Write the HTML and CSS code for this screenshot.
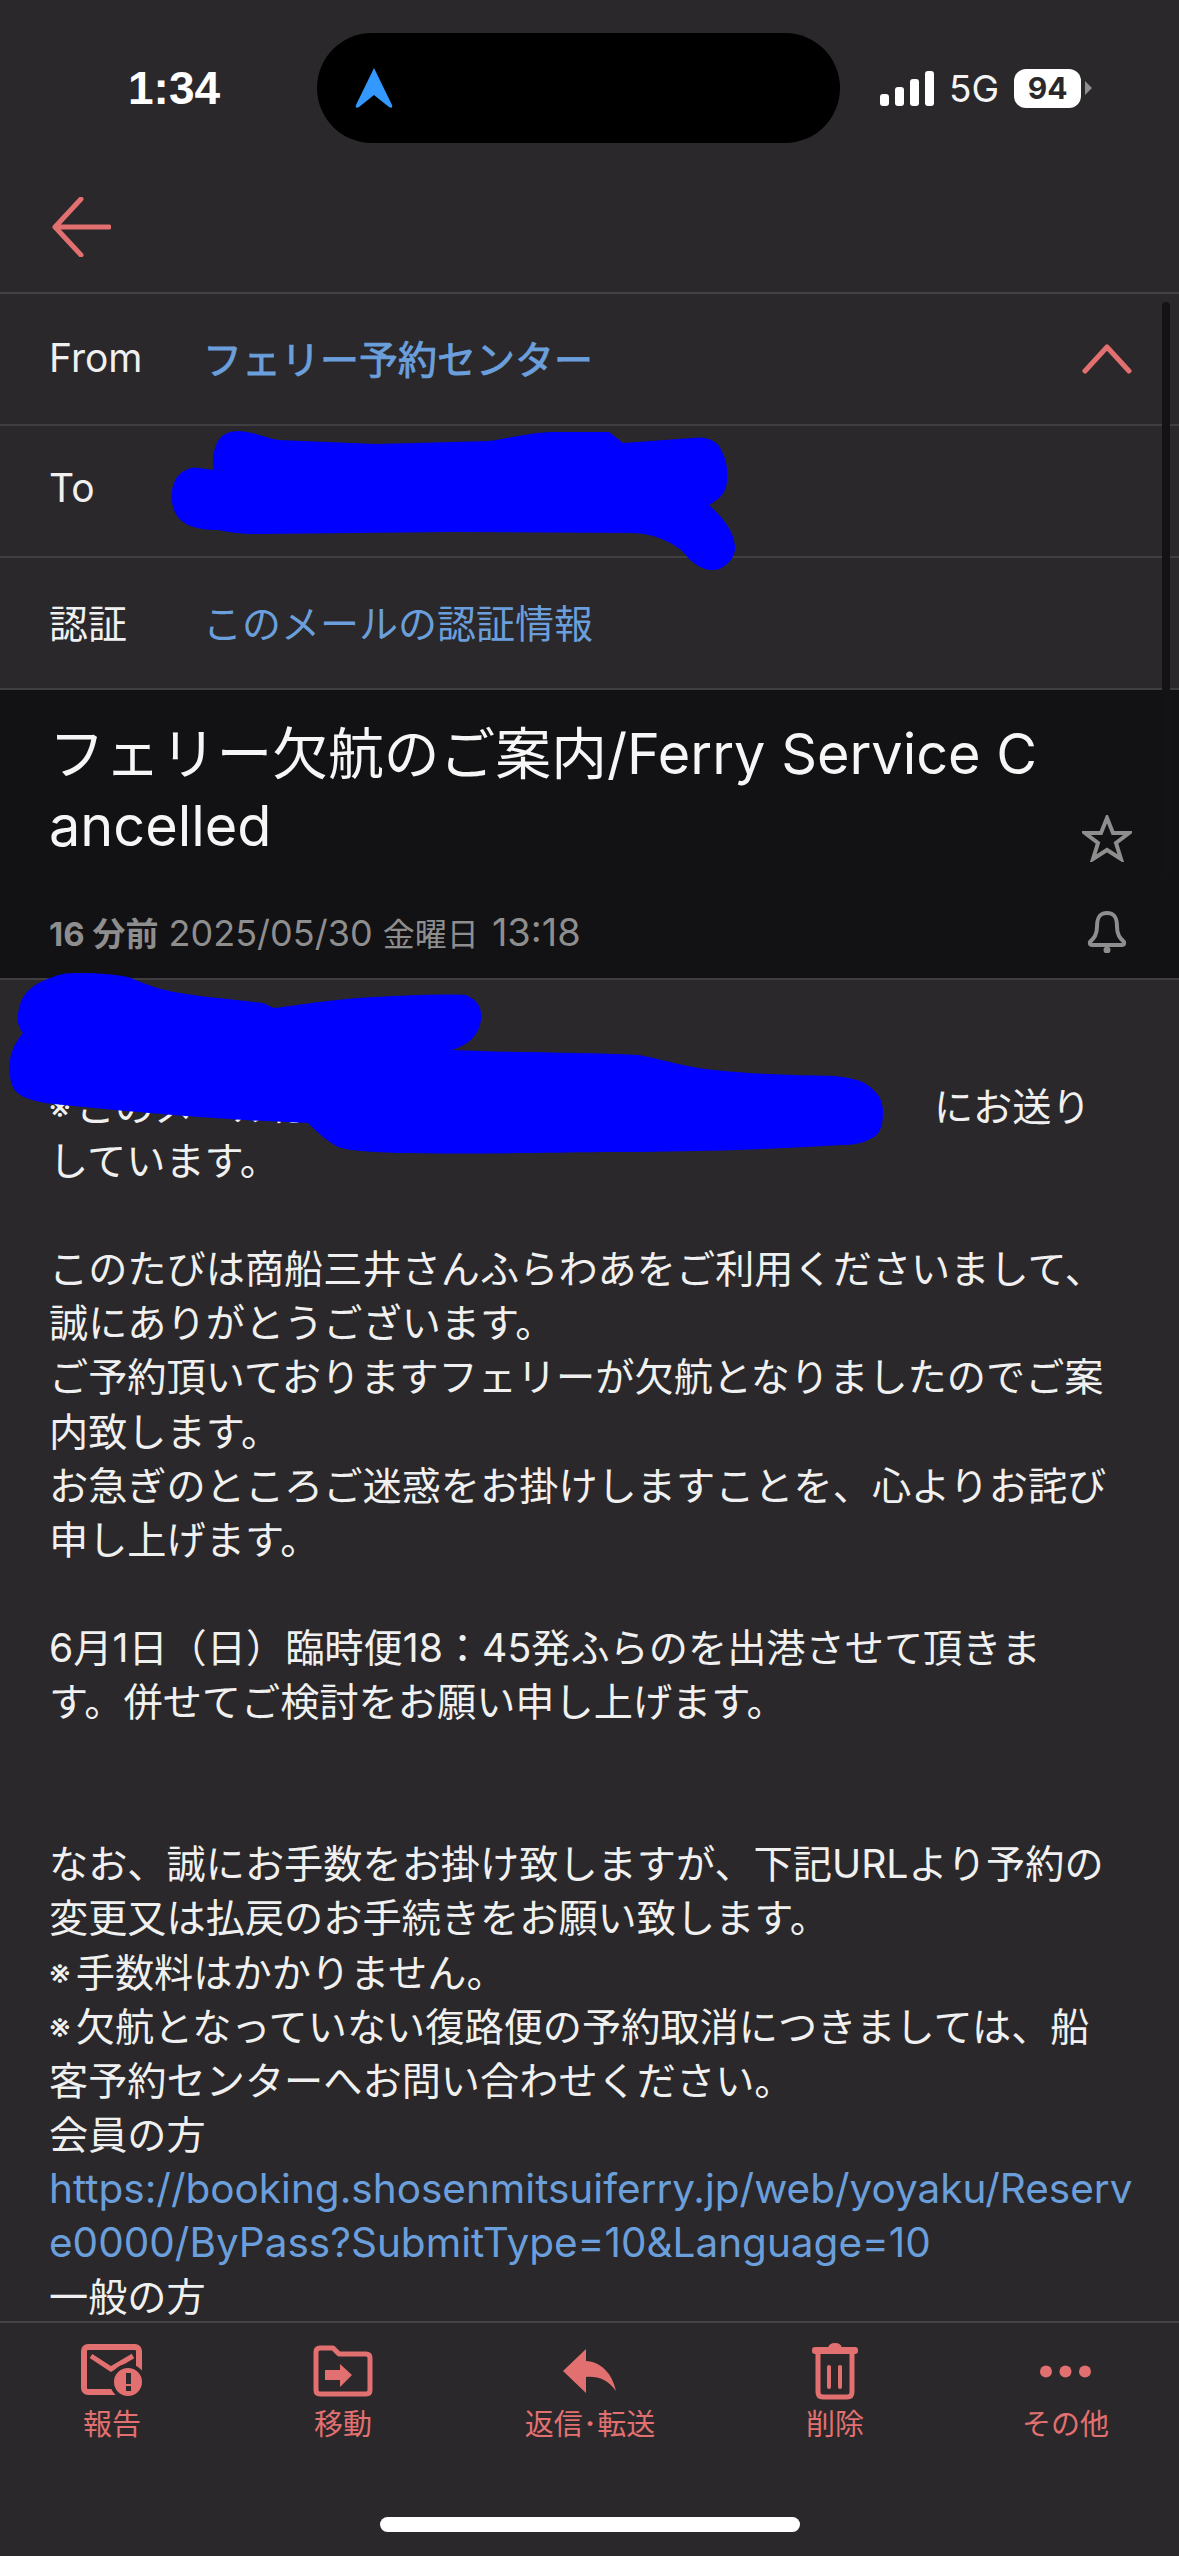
FILE: index.html
```html
<!DOCTYPE html>
<html lang="ja">
<head>
	<meta charset="UTF-8">
	<title>フェリー欠航のご案内</title>
	<link rel="stylesheet" href="styles.css">
</head>
<body>
	<div class="screen">
		<div class="status">
			<span class="time">1:34</span>
			<div class="island">
				<svg class="nav-arrow" width="38" height="41" viewBox="0 0 38 41"><path d="M19 0 L37 37 Q38 41 34 39 L19 27 L4 39 Q0 41 1 37 Z" fill="#3399ff"/></svg>
			</div>
			<div class="status-right">
				<div class="signal"><i class="b1"></i><i class="b2"></i><i class="b3"></i><i class="b4"></i></div>
				<span class="net">5G</span>
				<span class="battery">94</span>
				<span class="nub"></span>
			</div>
		</div>
		<div class="topbar">
			<svg width="60" height="60" viewBox="0 0 60 60"><path d="M58 30 H4 M30 2 L4 30 L30 58" fill="none" stroke="#e27070" stroke-width="5" stroke-linecap="round" stroke-linejoin="round"/></svg>
		</div>
		<div class="row">
			<span class="label">From</span>
			<span class="value strong">フェリー予約センター</span>
			<svg class="chevron" width="50" height="30" viewBox="0 0 50 30"><path d="M3 27 L25 3 L47 27" fill="none" stroke="#e27070" stroke-width="5" stroke-linecap="round" stroke-linejoin="round"/></svg>
		</div>
		<div class="row row-to">
			<span class="label">To</span>
		</div>
		<div class="row">
			<span class="label">認証</span>
			<span class="value">このメールの認証情報</span>
		</div>
		<div class="subject">
			<div class="subject-top">
				<h1 class="title">フェリー欠航のご案内/Ferry Service C<br>ancelled</h1>
				<svg class="star" width="50" height="47" viewBox="0 0 50 47"><path d="M25 3 L31 18 L47 18 L34 28 L39 44 L25 35 L11 44 L16 28 L3 18 L19 18 Z" fill="none" stroke="#8e8e8e" stroke-width="4" stroke-linejoin="miter"/></svg>
			</div>
			<div class="meta">
				<span><b>16 分前</b> 2025/05/30 <span class="day">金曜日</span> <span class="clock">13:18</span></span>
				<svg class="bell" width="40" height="42" viewBox="0 0 40 42"><path d="M20 2 C11 2 10 9 10 16 C10 24 7 27 3 31 Q2 34 5 34 H35 Q38 34 37 31 C33 27 30 24 30 16 C30 9 29 2 20 2 Z" fill="none" stroke="#8e8e8e" stroke-width="4" stroke-linejoin="round"/><circle cx="20" cy="39" r="3.5" fill="#8e8e8e"/></svg>
			</div>
		</div>
		<div class="mail">
			<p><span class="mark">※</span>このメールは<span class="gap">にお送り</span><br>しています。</p>
			<p>このたびは商船三井さんふらわあをご利用くださいまして、<br>誠にありがとうございます。<br>ご予約頂いておりますフェリーが欠航となりましたのでご案<br>内致します。<br>お急ぎのところご迷惑をお掛けしますことを、心よりお詫び<br>申し上げます。</p>
			<p>6月1日（日）臨時便18：45発ふらのを出港させて頂きま<br>す。併せてご検討をお願い申し上げます。</p>
			<p class="wide">なお、誠にお手数をお掛け致しますが、下記URLより予約の<br>変更又は払戻のお手続きをお願い致します。<br><span class="mark">※</span>手数料はかかりません。<br><span class="mark">※</span>欠航となっていない復路便の予約取消につきましては、船<br>客予約センターへお問い合わせください。<br>会員の方<br><span class="link">https://booking.shosenmitsuiferry.jp/web/yoyaku/Reserv<br>e0000/ByPass?SubmitType=10&amp;Language=10</span><br>一般の方</p>
		</div>
		<div class="toolbar">
			<div class="tools">
				<div class="tool">
					<div class="icon">
						<svg width="62" height="54" viewBox="0 0 62 54"><rect x="3" y="3" width="55" height="45" rx="4" fill="none" stroke="#e27070" stroke-width="6"/><path d="M10 12 L30 25 L52 12" fill="none" stroke="#e27070" stroke-width="5"/><circle cx="47" cy="38" r="16" fill="#e27070" stroke="#2a282a" stroke-width="4"/><rect x="45" y="29" width="5" height="11" fill="#2a282a"/><rect x="45" y="42" width="5" height="5" fill="#2a282a"/></svg>
					</div>
					<span>報告</span>
				</div>
				<div class="tool">
					<div class="icon">
						<svg width="60" height="52" viewBox="0 0 60 52"><path d="M3 7 Q3 3 7 3 H20 L26 9 H53 Q57 9 57 13 V45 Q57 49 53 49 H7 Q3 49 3 45 Z" fill="none" stroke="#e27070" stroke-width="5" stroke-linejoin="round"/><path d="M12 25 H27 V19 L39 30 L27 42 V35 H12 Z" fill="#e27070"/></svg>
					</div>
					<span>移動</span>
				</div>
				<div class="tool">
					<div class="icon">
						<svg width="54" height="44" viewBox="0 0 54 44"><path d="M0 22 L23 0 V12 C38 13 49 24 53 42 C45 31 35 27 23 28 V44 Z" fill="#e27070"/></svg>
					</div>
					<span>返信･転送</span>
				</div>
				<div class="tool">
					<div class="icon">
						<svg width="46" height="58" viewBox="0 0 46 58"><path d="M16 6 Q17 1 23 1 Q29 1 30 6 Z" fill="#e27070"/><rect x="0" y="5" width="46" height="7" rx="3" fill="#e27070"/><path d="M6 12 V50 Q6 55 11 55 H35 Q40 55 40 50 V12" fill="none" stroke="#e27070" stroke-width="5"/><rect x="15" y="23" width="4" height="24" rx="2" fill="#e27070"/><rect x="26" y="23" width="4" height="24" rx="2" fill="#e27070"/></svg>
					</div>
					<span>削除</span>
				</div>
				<div class="tool">
					<div class="icon">
						<svg width="51" height="13" viewBox="0 0 51 13"><circle cx="6" cy="6.5" r="6" fill="#e27070"/><circle cx="25.5" cy="6.5" r="6" fill="#e27070"/><circle cx="45" cy="6.5" r="6" fill="#e27070"/></svg>
					</div>
					<span>その他</span>
				</div>
			</div>
			<div class="home"></div>
		</div>
		<div class="scrollbar"></div>
		<svg class="scribbles" width="1179" height="2556" viewBox="0 0 1179 2556">
			<path d="M239 431 C255 432 265 438 278 440 L376 444 L489 441 C520 436 535 432 556 432 L609 432 L623 443 L692 438 C705 436 715 440 719 446 C726 458 728 466 727 480 C727 490 722 498 709 505 C720 515 733 528 735 546 C736 560 722 571 711 570 C700 569 694 563 688 558 C680 545 655 533 632 533 L451 532 L256 534 C240 534 228 532 218 530 C195 530 178 525 173 507 C170 495 172 485 177 477 C183 470 192 466 199 468 L214 470 C212 460 213 450 218 441 C222 434 230 431 239 431 Z"/>
			<path d="M53 977 C62 973 70 973 80 973 C100 973 118 975 128 977 C148 985 160 990 180 993 C210 998 240 1000 263 1003 L274 1008 C300 1005 340 998 376 997 C410 995 440 994 466 995 C476 1000 481 1005 481 1015 C482 1030 472 1045 451 1050 C520 1053 580 1052 639 1055 C665 1060 690 1068 714 1070 C760 1075 800 1075 835 1076 C850 1078 860 1080 866 1084 C878 1092 883 1100 883 1112 C883 1125 880 1135 872 1138 C862 1144 852 1145 842 1145 C760 1150 680 1152 602 1152 C540 1153 460 1154 398 1153 C365 1152 345 1150 338 1147 C325 1140 315 1130 308 1123 C220 1120 130 1112 45 1103 C28 1100 15 1095 12 1085 C7 1070 8 1050 23 1033 C16 1025 17 1015 20 1005 C24 990 38 982 53 977 Z"/>
		</svg>
	</div>
</body>
</html>
```

FILE: styles.css
```css
html,body,div,p,h1,span {
	margin: 0;
	padding: 0;
}
body {
	background-color: #2a282a;
	font-family: Inter, "Noto Sans CJK JP", sans-serif;
	color: #f0f0f0;
}
.screen {
	position: relative;
	display: flex;
	flex-direction: column;
	width: 1179px;
	height: 2556px;
	overflow: hidden;
}

/* status bar */
.status {
	display: flex;
	align-items: center;
	height: 176px;
	padding-left: 128px;
	box-sizing: border-box;
}
.time {
	width: 189px;
	font-family: "Liberation Sans", sans-serif;
	font-size: 46px;
	font-weight: 700;
	color: #fff;
}
.island {
	display: flex;
	align-items: center;
	width: 523px;
	height: 110px;
	padding-left: 38px;
	box-sizing: border-box;
	border-radius: 55px;
	background-color: #000;
}
.status-right {
	display: flex;
	align-items: center;
	margin-left: 40px;
}
.signal {
	display: flex;
	align-items: flex-end;
	gap: 6px;
	height: 35px;
}
.signal i {
	display: block;
	width: 9px;
	border-radius: 3px;
	background-color: #fff;
}
.signal .b1 { height: 12px; }
.signal .b2 { height: 19px; }
.signal .b3 { height: 27px; }
.signal .b4 { height: 35px; }
.net {
	margin-left: 15px;
	font-size: 37px;
	color: #f4f4f4;
}
.battery {
	width: 67px;
	height: 39px;
	margin-left: 15px;
	border-radius: 12px;
	background-color: #fff;
	color: #2a282a;
	font-size: 30px;
	font-weight: 700;
	line-height: 39px;
	text-align: center;
}
.nub {
	width: 0;
	height: 0;
	margin-left: 4px;
	border-top: 7px solid transparent;
	border-bottom: 7px solid transparent;
	border-left: 7px solid #8e8e8e;
}

/* header rows */
.topbar {
	display: flex;
	align-items: center;
	height: 118px;
	padding: 0 0 14px 51px;
	box-sizing: border-box;
	border-bottom: 2px solid #444244;
}
.row {
	display: flex;
	align-items: center;
	height: 132px;
	padding: 0 47px 4px 49px;
	box-sizing: border-box;
	border-bottom: 2px solid #403e40;
	font-size: 39px;
}
.row-to {
	padding-bottom: 8px;
}
.label {
	width: 154px;
}
.value {
	color: #6a9fdc;
}
.strong {
	-webkit-text-stroke: 0.9px #6a9fdc;
}
.chevron {
	margin: 4px 0 0 auto;
}

/* subject */
.subject {
	height: 290px;
	padding: 28px 47px 0 49px;
	box-sizing: border-box;
	background-color: #121113;
	border-bottom: 2px solid #403e40;
}
.subject-top {
	display: flex;
	justify-content: space-between;
	align-items: flex-end;
}
.title {
	font-size: 55.8px;
	font-weight: 400;
	line-height: 72px;
	color: #f6f6f6;
}
.meta {
	display: flex;
	justify-content: space-between;
	align-items: center;
	margin-top: 46px;
	font-size: 36px;
	line-height: 48px;
	color: #8e8e8e;
}
.meta b {
	font-size: 33px;
	font-weight: 700;
}
.day {
	font-size: 32px;
}
.clock {
	margin-left: 3px;
	font-size: 38px;
}
.bell {
	margin: -4px 5px 0 0;
}

/* mail text */
.mail {
	flex: 1;
	padding: 100px 0 0 49px;
	overflow: hidden;
	font-size: 39.2px;
	line-height: 54.1px;
}
.mail p {
	margin-bottom: 54.1px;
	white-space: nowrap;
}
.mail .wide {
	margin-top: 108.2px;
}
.mark {
	margin-right: 5px;
	font-size: 34px;
	line-height: 0;
	vertical-align: 2px;
}
.gap {
	margin-left: 623px;
}
.link {
	color: #6a9fdc;
	font-size: 40.5px;
	line-height: 0;
}

/* bottom bar */
.toolbar {
	height: 235px;
	box-sizing: border-box;
	border-top: 2px solid #444244;
	background-color: #2a282a;
}
.tools {
	display: grid;
	grid-template-columns: 224px 238px 256px 234px 227px;
	padding-top: 18px;
}
.tool {
	display: flex;
	flex-direction: column;
	align-items: center;
	color: #e27070;
	font-size: 29px;
	line-height: 40px;
}
.icon {
	display: flex;
	align-items: center;
	justify-content: center;
	height: 60px;
	margin-bottom: 4px;
}
.home {
	width: 420px;
	height: 15px;
	margin: 72px auto 0;
	border-radius: 8px;
	background-color: #fff;
}

/* things lying over the page */
.scrollbar {
	position: absolute;
	top: 302px;
	left: 1162px;
	width: 8px;
	height: 578px;
	border-radius: 4px;
	background-color: #131214;
}
.scribbles {
	position: absolute;
	top: 0;
	left: 0;
	fill: #0000ff;
}
```
